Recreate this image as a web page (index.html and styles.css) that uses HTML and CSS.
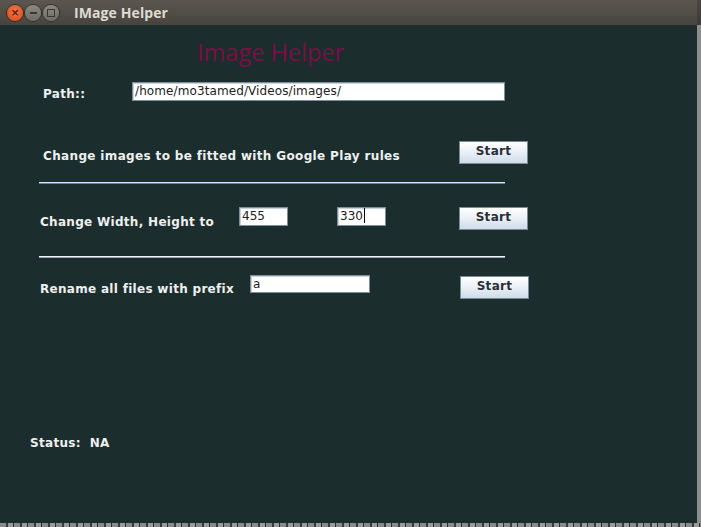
FILE: index.html
```html
<!DOCTYPE html>
<html>
<head>
<meta charset="utf-8">
<link rel="stylesheet" href="styles.css">
</head>
<body>
<div class="screen">
  <div class="window">
    <div class="titlebar">
      <div class="controls">
        <span class="ctl close">&#215;</span>
        <span class="ctl min"><span class="dash"></span></span>
        <span class="ctl max"><span class="sq"></span></span>
      </div>
      <span class="wtitle">IMage Helper</span>
    </div>
    <div class="content">
      <div class="heading">Image Helper</div>
      <div class="row row-path">
        <span class="label lbl-path">Path::</span>
        <div class="field f-path">/home/mo3tamed/Videos/images/</div>
      </div>
      <div class="row row-google">
        <span class="label lbl-google">Change images to be fitted with Google Play rules</span>
        <div class="btn b-google">Start</div>
      </div>
      <div class="sep sep-blue"></div>
      <div class="row row-size">
        <span class="label lbl-size">Change Width, Height to</span>
        <div class="field f-w">455</div>
        <div class="field f-h">330<span class="caret"></span></div>
        <div class="btn b-size">Start</div>
      </div>
      <div class="sep sep-white"></div>
      <div class="row row-rename">
        <span class="label lbl-rename">Rename all files with prefix</span>
        <div class="field f-prefix">a</div>
        <div class="btn b-rename">Start</div>
      </div>
      <div class="status">Status:&nbsp;&nbsp;NA</div>
    </div>
  </div>
  <div class="rightedge"></div>
</div>
<div class="bottomstrip"></div>
</body>
</html>
```
FILE: styles.css
```css
html, body {
  margin: 0;
  padding: 0;
  background: #1c2d2e;
  overflow: hidden;
}
.screen {
  display: flex;
  width: 701px;
  height: 523px;
}
.window {
  width: 697px;
  height: 523px;
  background: #1c2d2e;
  display: flex;
  flex-direction: column;
}
.rightedge {
  width: 4px;
  height: 523px;
  background: linear-gradient(to bottom, #4a4741 0, #3c3a36 25px, #8d8d8d 25px, #8d8d8d 100%);
}
.bottomstrip {
  height: 4px;
  width: 701px;
  background: repeating-linear-gradient(to right, #8a8a8a 0, #8a8a8a 6px, #3a3a3a 6px, #3a3a3a 8px, #9a9a9a 8px, #9a9a9a 13px, #2e2e2e 13px, #2e2e2e 14px);
}
.titlebar {
  height: 25px;
  flex: none;
  background: linear-gradient(to bottom, #5b5750 0%, #47443f 100%);
  display: flex;
  align-items: center;
}
.controls {
  display: flex;
  align-items: center;
  margin-left: 7px;
  gap: 2px;
}
.ctl {
  width: 16px;
  height: 16px;
  border-radius: 50%;
  display: flex;
  align-items: center;
  justify-content: center;
  box-sizing: border-box;
}
.close {
  background: radial-gradient(circle at 50% 40%, #f47a4e 0%, #e45a2a 60%, #c94619 100%);
  color: #5a1f0c;
  font: bold 11px "DejaVu Sans", sans-serif;
  line-height: 16px;
  box-shadow: 0 0 0 1px #3b2a22;
}
.min, .max {
  background: linear-gradient(to bottom, #8c8981 0%, #6e6b64 100%);
  box-shadow: 0 0 0 1px #34322e;
}
.dash {
  width: 7px;
  height: 2px;
  background: #3a3834;
}
.sq {
  width: 6px;
  height: 6px;
  border: 1px solid #3a3834;
}
.wtitle {
  margin-left: 15px;
  font: bold 14px "Open Sans", "DejaVu Sans", sans-serif;
  color: #dfdbd2;
  letter-spacing: 0.1px;
}
.content {
  flex: 1;
  display: flex;
  flex-direction: column;
}
.heading {
  margin-top: 11px;
  height: 28px;
  line-height: 28px;
  padding-left: 197px;
  font: 23.5px "Open Sans", "DejaVu Sans", sans-serif;
  color: #7b0f43;
}
.row {
  display: flex;
  align-items: flex-start;
}
.label {
  font: bold 12px "DejaVu Sans", sans-serif;
  line-height: 14px;
  color: #eef0ee;
  white-space: nowrap;
  letter-spacing: 0.3px;
}
.field {
  box-sizing: border-box;
  background: #ffffff;
  border: 1px solid #7f8d9c;
  box-shadow: inset 1px 1px 0 #c9d2db;
  font: 12px "DejaVu Sans", sans-serif;
  color: #222;
  line-height: 16px;
  padding-left: 2px;
  white-space: nowrap;
  display: flex;
}
.f-path {
  letter-spacing: 0.1px;
}
.caret {
  display: inline-block;
  width: 1px;
  height: 15px;
  background: #000;
  margin-left: 1px;
}
.btn {
  box-sizing: border-box;
  width: 69px;
  height: 23px;
  border: 1px solid #7a8a99;
  background: linear-gradient(to bottom, #ffffff 0%, #eef3f8 40%, #cfdcea 100%);
  font: bold 12px "DejaVu Sans", sans-serif;
  color: #2a2f36;
  text-align: center;
  line-height: 19px;
  letter-spacing: 0.3px;
}
.row-path {
  margin-top: 18px;
  height: 18px;
}
.lbl-path {
  margin-left: 43px;
  margin-top: 5px;
  width: 89px;
}
.f-path {
  width: 373px;
  height: 19px;
}
.row-google {
  margin-top: 41px;
  height: 23px;
}
.lbl-google {
  margin-left: 43px;
  margin-top: 8px;
  width: 416px;
  letter-spacing: 0.35px;
}
.sep {
  margin-left: 39px;
  width: 466px;
  height: 1px;
}
.sep-blue {
  margin-top: 18px;
  background: #d8e6fb;
  box-shadow: 0 1px 0 #5d82b8;
}
.sep-white {
  margin-top: 26px;
  background: #f2f4f6;
  box-shadow: 0 1px 0 #8fa2b6;
}
.row-size {
  margin-top: 23px;
  height: 24px;
}
.lbl-size {
  margin-left: 40px;
  margin-top: 9px;
  width: 199px;
}
.f-w {
  width: 49px;
  height: 19px;
  margin-top: 1px;
}
.f-h {
  margin-left: 49px;
  width: 49px;
  height: 19px;
  margin-top: 1px;
}
.b-size {
  margin-left: 73px;
  margin-top: 1px;
}
.row-rename {
  margin-top: 18px;
  height: 24px;
}
.lbl-rename {
  margin-left: 40px;
  margin-top: 7px;
  width: 210px;
}
.f-prefix {
  width: 120px;
  height: 18px;
}
.b-rename {
  margin-left: 90px;
  margin-top: 1px;
}
.status {
  margin-top: 137px;
  margin-left: 30px;
  font: bold 12px "DejaVu Sans", sans-serif;
  line-height: 14px;
  color: #eef0ee;
  letter-spacing: 0.3px;
}
```
